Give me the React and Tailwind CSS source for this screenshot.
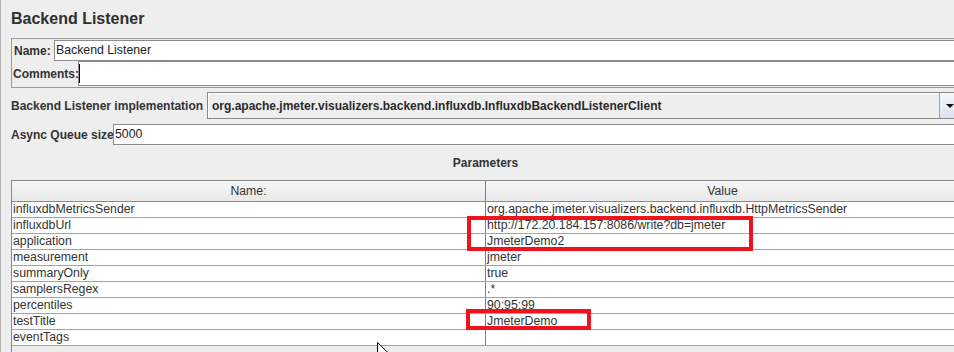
import React from 'react';

const params = [
  ['influxdbMetricsSender', 'org.apache.jmeter.visualizers.backend.influxdb.HttpMetricsSender'],
  ['influxdbUrl', 'http://172.20.184.157:8086/write?db=jmeter'],
  ['application', 'JmeterDemo2'],
  ['measurement', 'jmeter'],
  ['summaryOnly', 'true'],
  ['samplersRegex', '.*'],
  ['percentiles', '90;95;99'],
  ['testTitle', 'JmeterDemo'],
  ['eventTags', ''],
];

function ParamRow({ name, value }) {
  return (
    <div className="grid h-[16px] grid-cols-[474px_1fr] border-b border-[#a3a3a3] bg-white text-[12.3px] leading-[15px]">
      <div className="border-r border-[#7f7f7f] pl-[1px]">{name}</div>
      <div className="pl-[1px]">{value}</div>
    </div>
  );
}

export default function App() {
  return (
    <div className="relative h-[352px] w-[954px] overflow-hidden border-l border-[#b4b4b4] bg-[#eeeeee] font-['Liberation_Sans',Arial,sans-serif] text-[12px] text-[#333333]">
      <div className="w-[959px] pl-[10px]">
        <div className="h-[38px] pt-[9px] text-[16px] font-bold leading-[20px] text-[#2e2e2e]">
          Backend Listener
        </div>

        <div className="border border-r-0 border-[#9a9a9a] py-[1px]">
          <div className="flex h-[21px] items-center">
            <div className="w-[42px] shrink-0 whitespace-nowrap pl-[2px] font-bold">Name:</div>
            <div className="flex h-full flex-1 items-center border border-r-0 border-[#8c8c8c] bg-white pl-[1px] text-[12.3px] text-[#222]">
              Backend Listener
            </div>
          </div>
          <div className="flex h-[25px] items-center">
            <div className="w-[66px] shrink-0 whitespace-nowrap pl-[1px] font-bold">Comments:</div>
            <div className="flex h-full flex-1 items-center border border-r-0 border-[#8c8c8c] bg-white">
              <div className="h-[19px] w-[1px] bg-black" />
            </div>
          </div>
        </div>

        <div className="mt-[4px] flex h-[27px] items-center">
          <div className="w-[196px] shrink-0 whitespace-nowrap font-bold">Backend Listener implementation</div>
          <div className="flex h-full flex-1 border border-[#8a8a8a] bg-[#eeeeee]">
            <div className="flex flex-1 items-center whitespace-nowrap border-t border-l border-white pl-[3px] font-bold text-[#2a2a2a]">
              org.apache.jmeter.visualizers.backend.influxdb.InfluxdbBackendListenerClient
            </div>
            <div className="flex w-[20px] items-center justify-center border-l border-[#9aa3ad] bg-gradient-to-b from-[#f4f8fc] to-[#d9e3ee]">
              <div className="h-0 w-0 border-x-[4px] border-t-[4px] border-x-transparent border-t-[#111]" />
            </div>
          </div>
        </div>

        <div className="mt-[5px] flex h-[21px] items-center">
          <div className="w-[102px] shrink-0 whitespace-nowrap font-bold">Async Queue size</div>
          <div className="flex h-full flex-1 items-center border border-r-0 border-[#8c8c8c] bg-white pl-[1px] text-[12.3px] text-[#222]">
            5000
          </div>
        </div>

        <div className="flex h-[35px] items-center justify-center font-bold">Parameters</div>

        <div className="h-[200px] border border-[#888888]">
          <div className="grid h-[21px] grid-cols-[474px_1fr] border-b border-[#8a8a8a] bg-gradient-to-b from-[#f6f6f6] to-[#e9e9e9] text-[12.3px]">
            <div className="flex items-center justify-center border-r border-[#7f7f7f]">Name:</div>
            <div className="flex items-center justify-center">Value</div>
          </div>
          {params.map(([name, value]) => (
            <ParamRow key={name} name={name} value={value} />
          ))}
        </div>
      </div>

      <div className="absolute left-[466px] top-[216px] h-[35px] w-[286px] border-4 border-[#f0121c]" />
      <div className="absolute left-[465px] top-[309px] h-[21px] w-[125px] border-4 border-[#f0121c]" />

      <svg className="absolute left-[376px] top-[342px]" width="13" height="20" viewBox="0 0 13 20">
        <path d="M0.5 0.5 L0.5 16 L4.3 12.3 L6.8 18.2 L9 17.3 L6.6 11.5 L11.8 11.5 Z" fill="#ffffff" stroke="#000000" strokeWidth="1" />
      </svg>
    </div>
  );
}
